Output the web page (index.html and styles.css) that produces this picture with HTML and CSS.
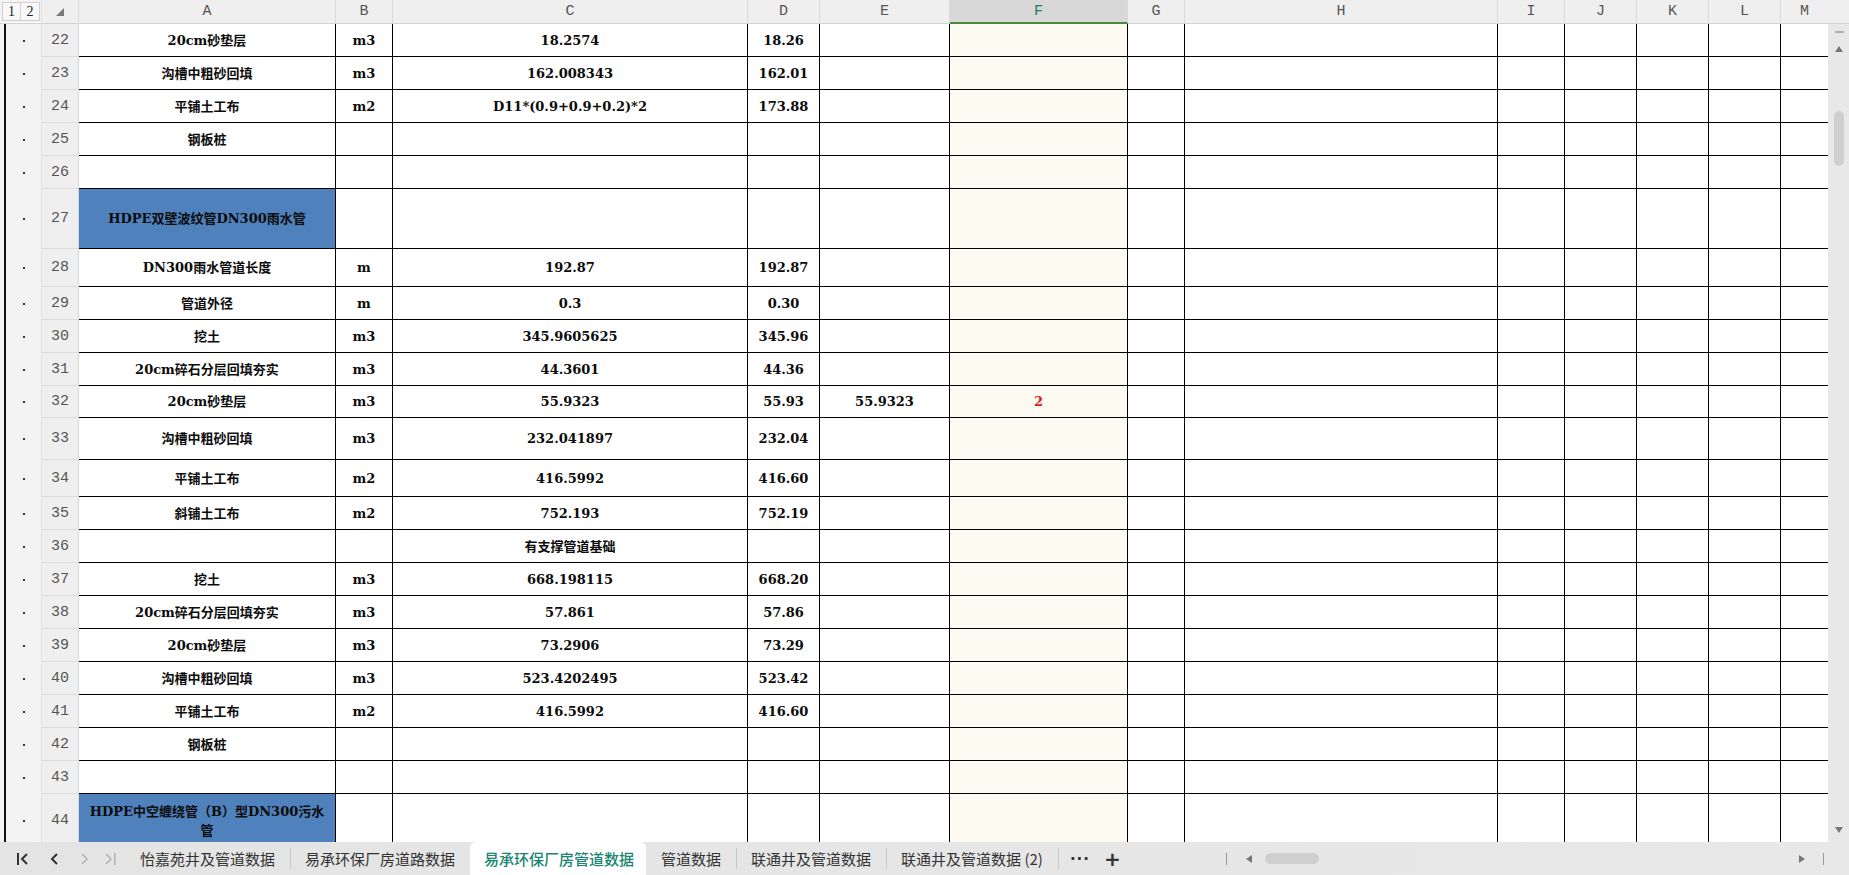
FILE: index.html
```html
<!DOCTYPE html>
<html lang="zh">
<head>
<meta charset="utf-8">
<title>易承环保厂房管道数据</title>
<link rel="stylesheet" href="styles.css">
</head>
<body>
<div class="app">
  <div class="sheet">
    <div class="grid">
      <div class="row hdr">
        <div class="o-hd"><span class="lvl">1</span><span class="lvl">2</span></div>
        <div class="corner"><svg width="8" height="8" viewBox="0 0 8 8"><polygon points="8,0 8,8 0,8" fill="#7a7a7a"/></svg></div>
        <div>A</div><div>B</div><div>C</div><div>D</div><div>E</div><div class="sel">F</div><div>G</div><div>H</div><div>I</div><div>J</div><div>K</div><div>L</div><div>M</div>
      </div>

      <div class="row h33"><div class="o"><i></i></div><div class="n">22</div><div class="c">20cm砂垫层</div><div class="c">m3</div><div class="c">18.2574</div><div class="c">18.26</div><div class="c"></div><div class="c f"></div><div class="c"></div><div class="c"></div><div class="c"></div><div class="c"></div><div class="c"></div><div class="c"></div><div class="c"></div></div>
      <div class="row h33"><div class="o"><i></i></div><div class="n">23</div><div class="c">沟槽中粗砂回填</div><div class="c">m3</div><div class="c">162.008343</div><div class="c">162.01</div><div class="c"></div><div class="c f"></div><div class="c"></div><div class="c"></div><div class="c"></div><div class="c"></div><div class="c"></div><div class="c"></div><div class="c"></div></div>
      <div class="row h33"><div class="o"><i></i></div><div class="n">24</div><div class="c">平铺土工布</div><div class="c">m2</div><div class="c">D11*(0.9+0.9+0.2)*2</div><div class="c">173.88</div><div class="c"></div><div class="c f"></div><div class="c"></div><div class="c"></div><div class="c"></div><div class="c"></div><div class="c"></div><div class="c"></div><div class="c"></div></div>
      <div class="row h33"><div class="o"><i></i></div><div class="n">25</div><div class="c">钢板桩</div><div class="c"></div><div class="c"></div><div class="c"></div><div class="c"></div><div class="c f"></div><div class="c"></div><div class="c"></div><div class="c"></div><div class="c"></div><div class="c"></div><div class="c"></div><div class="c"></div></div>
      <div class="row h33"><div class="o"><i></i></div><div class="n">26</div><div class="c"></div><div class="c"></div><div class="c"></div><div class="c"></div><div class="c"></div><div class="c f"></div><div class="c"></div><div class="c"></div><div class="c"></div><div class="c"></div><div class="c"></div><div class="c"></div><div class="c"></div></div>
      <div class="row h60"><div class="o"><i></i></div><div class="n">27</div><div class="c blue">HDPE双壁波纹管DN300雨水管</div><div class="c"></div><div class="c"></div><div class="c"></div><div class="c"></div><div class="c f"></div><div class="c"></div><div class="c"></div><div class="c"></div><div class="c"></div><div class="c"></div><div class="c"></div><div class="c"></div></div>
      <div class="row h38"><div class="o"><i></i></div><div class="n">28</div><div class="c">DN300雨水管道长度</div><div class="c">m</div><div class="c">192.87</div><div class="c">192.87</div><div class="c"></div><div class="c f"></div><div class="c"></div><div class="c"></div><div class="c"></div><div class="c"></div><div class="c"></div><div class="c"></div><div class="c"></div></div>
      <div class="row h33"><div class="o"><i></i></div><div class="n">29</div><div class="c">管道外径</div><div class="c">m</div><div class="c">0.3</div><div class="c">0.30</div><div class="c"></div><div class="c f"></div><div class="c"></div><div class="c"></div><div class="c"></div><div class="c"></div><div class="c"></div><div class="c"></div><div class="c"></div></div>
      <div class="row h33"><div class="o"><i></i></div><div class="n">30</div><div class="c">挖土</div><div class="c">m3</div><div class="c">345.9605625</div><div class="c">345.96</div><div class="c"></div><div class="c f"></div><div class="c"></div><div class="c"></div><div class="c"></div><div class="c"></div><div class="c"></div><div class="c"></div><div class="c"></div></div>
      <div class="row h33"><div class="o"><i></i></div><div class="n">31</div><div class="c">20cm碎石分层回填夯实</div><div class="c">m3</div><div class="c">44.3601</div><div class="c">44.36</div><div class="c"></div><div class="c f"></div><div class="c"></div><div class="c"></div><div class="c"></div><div class="c"></div><div class="c"></div><div class="c"></div><div class="c"></div></div>
      <div class="row h32"><div class="o"><i></i></div><div class="n">32</div><div class="c">20cm砂垫层</div><div class="c">m3</div><div class="c">55.9323</div><div class="c">55.93</div><div class="c">55.9323</div><div class="c f red">2</div><div class="c"></div><div class="c"></div><div class="c"></div><div class="c"></div><div class="c"></div><div class="c"></div><div class="c"></div></div>
      <div class="row h42"><div class="o"><i></i></div><div class="n">33</div><div class="c">沟槽中粗砂回填</div><div class="c">m3</div><div class="c">232.041897</div><div class="c">232.04</div><div class="c"></div><div class="c f"></div><div class="c"></div><div class="c"></div><div class="c"></div><div class="c"></div><div class="c"></div><div class="c"></div><div class="c"></div></div>
      <div class="row h37"><div class="o"><i></i></div><div class="n">34</div><div class="c">平铺土工布</div><div class="c">m2</div><div class="c">416.5992</div><div class="c">416.60</div><div class="c"></div><div class="c f"></div><div class="c"></div><div class="c"></div><div class="c"></div><div class="c"></div><div class="c"></div><div class="c"></div><div class="c"></div></div>
      <div class="row h33"><div class="o"><i></i></div><div class="n">35</div><div class="c">斜铺土工布</div><div class="c">m2</div><div class="c">752.193</div><div class="c">752.19</div><div class="c"></div><div class="c f"></div><div class="c"></div><div class="c"></div><div class="c"></div><div class="c"></div><div class="c"></div><div class="c"></div><div class="c"></div></div>
      <div class="row h33"><div class="o"><i></i></div><div class="n">36</div><div class="c"></div><div class="c"></div><div class="c">有支撑管道基础</div><div class="c"></div><div class="c"></div><div class="c f"></div><div class="c"></div><div class="c"></div><div class="c"></div><div class="c"></div><div class="c"></div><div class="c"></div><div class="c"></div></div>
      <div class="row h33"><div class="o"><i></i></div><div class="n">37</div><div class="c">挖土</div><div class="c">m3</div><div class="c">668.198115</div><div class="c">668.20</div><div class="c"></div><div class="c f"></div><div class="c"></div><div class="c"></div><div class="c"></div><div class="c"></div><div class="c"></div><div class="c"></div><div class="c"></div></div>
      <div class="row h33"><div class="o"><i></i></div><div class="n">38</div><div class="c">20cm碎石分层回填夯实</div><div class="c">m3</div><div class="c">57.861</div><div class="c">57.86</div><div class="c"></div><div class="c f"></div><div class="c"></div><div class="c"></div><div class="c"></div><div class="c"></div><div class="c"></div><div class="c"></div><div class="c"></div></div>
      <div class="row h33"><div class="o"><i></i></div><div class="n">39</div><div class="c">20cm砂垫层</div><div class="c">m3</div><div class="c">73.2906</div><div class="c">73.29</div><div class="c"></div><div class="c f"></div><div class="c"></div><div class="c"></div><div class="c"></div><div class="c"></div><div class="c"></div><div class="c"></div><div class="c"></div></div>
      <div class="row h33"><div class="o"><i></i></div><div class="n">40</div><div class="c">沟槽中粗砂回填</div><div class="c">m3</div><div class="c">523.4202495</div><div class="c">523.42</div><div class="c"></div><div class="c f"></div><div class="c"></div><div class="c"></div><div class="c"></div><div class="c"></div><div class="c"></div><div class="c"></div><div class="c"></div></div>
      <div class="row h33"><div class="o"><i></i></div><div class="n">41</div><div class="c">平铺土工布</div><div class="c">m2</div><div class="c">416.5992</div><div class="c">416.60</div><div class="c"></div><div class="c f"></div><div class="c"></div><div class="c"></div><div class="c"></div><div class="c"></div><div class="c"></div><div class="c"></div><div class="c"></div></div>
      <div class="row h33"><div class="o"><i></i></div><div class="n">42</div><div class="c">钢板桩</div><div class="c"></div><div class="c"></div><div class="c"></div><div class="c"></div><div class="c f"></div><div class="c"></div><div class="c"></div><div class="c"></div><div class="c"></div><div class="c"></div><div class="c"></div><div class="c"></div></div>
      <div class="row h33"><div class="o"><i></i></div><div class="n">43</div><div class="c"></div><div class="c"></div><div class="c"></div><div class="c"></div><div class="c"></div><div class="c f"></div><div class="c"></div><div class="c"></div><div class="c"></div><div class="c"></div><div class="c"></div><div class="c"></div><div class="c"></div></div>
      <div class="row h54"><div class="o"><i></i></div><div class="n">44</div><div class="c blue">HDPE中空缠绕管（B）型DN300污水<br>管</div><div class="c"></div><div class="c"></div><div class="c"></div><div class="c"></div><div class="c f"></div><div class="c"></div><div class="c"></div><div class="c"></div><div class="c"></div><div class="c"></div><div class="c"></div><div class="c"></div></div>
    </div>
    <div class="vs">
      <div class="vs-top"></div>
      <div class="vs-track">
        <span class="vs-dash"></span>
        <svg class="vs-up" width="8" height="6" viewBox="0 0 8 6"><polygon points="4,0 8,6 0,6" fill="#777"/></svg>
        <span class="vs-thumb"></span>
        <svg class="vs-down" width="8" height="6" viewBox="0 0 8 6"><polygon points="0,0 8,0 4,6" fill="#777"/></svg>
      </div>
    </div>
  </div>

  <div class="tabbar">
    <div class="tabs-area">
      <div class="nav">
        <svg width="14" height="14" viewBox="0 0 14 14"><rect x="1" y="1" width="2" height="12" fill="#333"/><polyline points="11,2 6,7 11,12" fill="none" stroke="#333" stroke-width="2"/></svg>
        <svg width="10" height="14" viewBox="0 0 10 14"><polyline points="7,2 2,7 7,12" fill="none" stroke="#333" stroke-width="2"/></svg>
        <svg width="10" height="14" viewBox="0 0 10 14"><polyline points="3,2 8,7 3,12" fill="none" stroke="#b4b4b4" stroke-width="1.6"/></svg>
        <svg width="14" height="14" viewBox="0 0 14 14"><polyline points="3,2 8,7 3,12" fill="none" stroke="#b4b4b4" stroke-width="1.6"/><rect x="11" y="1" width="1.6" height="12" fill="#b4b4b4"/></svg>
      </div>
      <div class="tab">怡嘉苑井及管道数据</div>
      <div class="tab sep">易承环保厂房道路数据</div>
      <div class="tab active">易承环保厂房管道数据</div>
      <div class="tab">管道数据</div>
      <div class="tab sep">联通井及管道数据</div>
      <div class="tab sep">联通井及管道数据 (2)</div>
      <div class="more sep">···</div>
      <div class="plus">+</div>
    </div>
    <div class="hs">
      <span class="hs-bar"></span>
      <svg width="6" height="8" viewBox="0 0 6 8"><polygon points="6,0 6,8 0,4" fill="#777"/></svg>
      <span class="hs-thumb"></span>
      <span class="hs-fill"></span>
      <svg width="6" height="8" viewBox="0 0 6 8"><polygon points="0,0 6,4 0,8" fill="#777"/></svg>
      <span class="hs-bar r"></span>
    </div>
  </div>
</div>
</body>
</html>
```
FILE: styles.css
```css
* { box-sizing: border-box; margin: 0; padding: 0; }
html, body { width: 1849px; height: 875px; overflow: hidden; background: #fff; }
body { font-family: "DejaVu Serif", "Noto Sans CJK SC", serif; color: #111; }

.app { display: flex; flex-direction: column; width: 1849px; height: 875px; }
.sheet { display: flex; height: 842px; overflow: hidden; flex: none; }
.grid { width: 1828px; display: flex; flex-direction: column; overflow: hidden; }

.row {
  display: grid;
  grid-template-columns: 42px 37px 257px 57px 355px 72px 130px 178px 57px 313px 67px 72px 72px 72px 47px;
  flex: none;
}
.h32 { height: 32px; }
.h33 { height: 33px; }
.h37 { height: 37px; }
.h38 { height: 38px; }
.h42 { height: 42px; }
.h54 { height: 54px; }
.h60 { height: 60px; }

/* header row */
.hdr { height: 24px; background: #efefef; }
.hdr > div {
  border-right: 1px solid #dadada;
  border-bottom: 1px solid #d3d3d3;
  display: flex; align-items: center; justify-content: center;
  font-family: "Liberation Mono", monospace; font-size: 15px; color: #555;
}
.hdr > div:last-child { border-right: none; }
.hdr > .o-hd { justify-content: flex-start; padding-left: 2px; background: #f3f3f3; border-right: 1px solid #e0e0e0; }
.lvl {
  width: 19px; height: 19px; border: 1px solid #d0d0d0; background: #f8f8f8;
  display: flex; align-items: center; justify-content: center;
  font-family: "Liberation Serif", serif; font-size: 14px; color: #222;
}
.lvl + .lvl { border-left: none; }
.hdr > .corner { justify-content: flex-end; align-items: flex-end; padding: 0 14px 7px 0; }
.hdr > .sel { background: #d8d8d8; border-bottom: 2px solid #4a8a3c; color: #1e7a5e; }

/* outline column */
.o {
  background: #f3f3f3 linear-gradient(to right, transparent 4px, #111 4px, #111 6px, transparent 6px);
  border-right: 1px solid #e0e0e0;
  display: flex; align-items: center; padding-left: 23px;
}
.o i { display: block; width: 2px; height: 2px; background: #333; }

/* row numbers */
.n {
  background: #efefef;
  border-right: 1px solid #d6d6d6;
  border-bottom: 1px solid #dcdcdc;
  display: flex; align-items: center; justify-content: center;
  font-family: "Liberation Mono", monospace; font-size: 15px; color: #555;
}

/* data cells */
.c {
  border-right: 1px solid #000;
  border-bottom: 1px solid #000;
  display: flex; align-items: center; justify-content: center;
  text-align: center;
  font-weight: 700; font-size: 13px; line-height: 19px;
  padding: 0 4px;
  overflow: hidden; white-space: nowrap;
  color: #0c0c0c;
}
.c:last-child { border-right: none; }
.f { background: #fdfaf2; }
.blue { background: #4f81bd; }
.red { color: #e0201c; }

/* vertical scrollbar */
.vs { width: 21px; display: flex; flex-direction: column; flex: none; }
.vs-top { height: 24px; background: #efefef; border-bottom: 1px solid #d3d3d3; flex: none; }
.vs-track { flex: 1; background: #e8e8e8; display: flex; flex-direction: column; align-items: center; padding-left: 1px; }
.vs-dash { display: block; width: 9px; height: 2px; background: #b0b0b0; margin-top: 7px; }
.vs-up { margin-top: 13px; }
.vs-thumb { display: block; width: 10px; height: 55px; border-radius: 5px; background: #cfcfcf; margin-top: 59px; }
.vs-down { margin-top: auto; margin-bottom: 9px; }

/* tab bar */
.tabbar {
  height: 33px; flex: none;
  background: linear-gradient(to right, #e4e4e4, #e8e8e8);
  display: flex; align-items: stretch;
  font-family: "Noto Sans CJK SC", sans-serif; font-size: 15px; color: #333;
}
.tabs-area { width: 1220px; display: flex; align-items: stretch; flex: none; }
.nav { width: 125px; display: flex; align-items: center; padding-left: 16px; }
.nav svg:nth-child(1) { margin-right: 20px; }
.nav svg:nth-child(2) { margin-right: 19px; }
.nav svg:nth-child(3) { margin-right: 14px; }
.tab { display: flex; align-items: center; padding: 0 15px; position: relative; white-space: nowrap; }
.sep::before {
  content: ""; position: absolute; left: 0; top: 6px; width: 1px; height: 21px; background: #c9c9c9;
}
.tab.active { background: #fff; color: #178670; border-radius: 6px 6px 0 0; padding: 0 12px 0 14px; font-weight: 500; }
.more {
  display: flex; align-items: center; padding: 0 10px 0 12px; position: relative;
  font-family: "DejaVu Sans", sans-serif; font-size: 15px; font-weight: 700; letter-spacing: 1px; color: #333;
}
.plus { display: flex; align-items: center; padding: 0 4px; font-family: "DejaVu Sans", sans-serif; font-size: 20px; font-weight: 700; color: #333; }

.hs { flex: 1; display: flex; align-items: center; padding: 0 25px 0 6px; }
.hs-bar { display: block; width: 1px; height: 12px; background: #999; margin-right: 19px; }
.hs-bar.r { margin-right: 0; margin-left: 18px; }
.hs-thumb { display: block; width: 54px; height: 11px; border-radius: 6px; background: #cfcfcf; margin-left: 13px; }
.hs-fill { flex: 1; }
```
